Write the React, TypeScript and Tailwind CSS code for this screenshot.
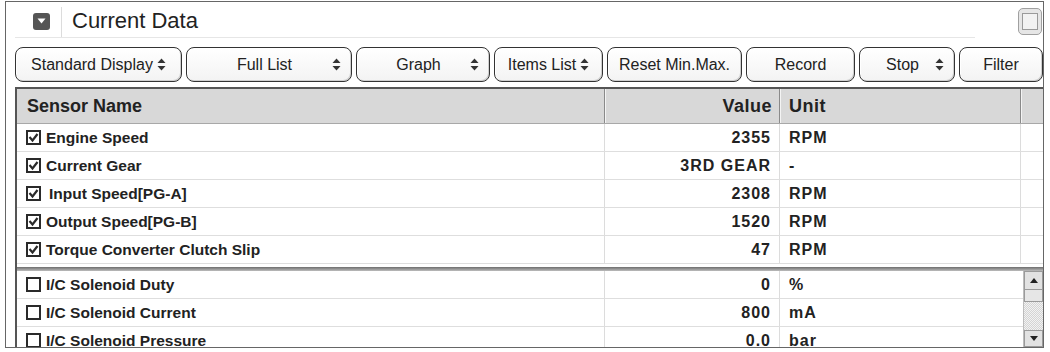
import React from 'react';

interface SensorRow {
  name: string;
  value: string;
  unit: string;
  checked: boolean;
  indent?: boolean;
}

const topRows: SensorRow[] = [
  { name: 'Engine Speed', value: '2355', unit: 'RPM', checked: true },
  { name: 'Current Gear', value: '3RD GEAR', unit: '-', checked: true },
  { name: 'Input Speed[PG-A]', value: '2308', unit: 'RPM', checked: true, indent: true },
  { name: 'Output Speed[PG-B]', value: '1520', unit: 'RPM', checked: true },
  { name: 'Torque Converter Clutch Slip', value: '47', unit: 'RPM', checked: true },
];

const bottomRows: SensorRow[] = [
  { name: 'I/C Solenoid Duty', value: '0', unit: '%', checked: false },
  { name: 'I/C Solenoid Current', value: '800', unit: 'mA', checked: false },
  { name: 'I/C Solenoid Pressure', value: '0.0', unit: 'bar', checked: false },
];

const buttons = [
  { label: 'Standard Display', w: 'w-[167px]', arrow: true, tight: true },
  { label: 'Full List', w: 'w-[166px]', arrow: true },
  { label: 'Graph', w: 'w-[134px]', arrow: true },
  { label: 'Items List', w: 'w-[109px]', arrow: true, tight: true },
  { label: 'Reset Min.Max.', w: 'w-[135px]', arrow: false },
  { label: 'Record', w: 'w-[109px]', arrow: false },
  { label: 'Stop', w: 'w-[96px]', arrow: true },
  { label: 'Filter', w: 'w-[84px]', arrow: false },
];

const UpDown = () => (
  <svg width="9" height="13" viewBox="0 0 9 13" className="shrink-0">
    <path d="M4.5 0.5 L8.5 5 H0.5 Z" fill="#333" />
    <path d="M4.5 12.5 L8.5 8 H0.5 Z" fill="#333" />
  </svg>
);

const CheckBox = ({ checked }: { checked: boolean }) => (
  <span className="w-[15px] h-[15px] border-2 border-[#2a2a2a] bg-white flex items-center justify-center shrink-0">
    {checked && (
      <svg width="11" height="11" viewBox="0 0 11 11">
        <path d="M1.5 5 L4.5 8.5 L9.5 2" fill="none" stroke="#2a2a2a" strokeWidth="2.2" />
      </svg>
    )}
  </span>
);

const DataRow = ({ row }: { row: SensorRow }) => (
  <div className="grid grid-cols-[588px_175px_241px_1fr] h-[28px] border-b border-[#dedede] text-[#222] font-bold">
    <div className="flex items-center pl-[9px] border-r border-[#dcdcdc]">
      <CheckBox checked={row.checked} />
      <span className={`text-[15.5px] ${row.indent ? 'ml-[8px]' : 'ml-[5px]'}`}>{row.name}</span>
    </div>
    <div className="flex items-center justify-end pr-[8px] border-r border-[#dcdcdc] text-[16px] tracking-[1px]">
      {row.value}
    </div>
    <div className="flex items-center pl-[9px] border-r border-[#dcdcdc] text-[16px] tracking-[1px]">
      {row.unit}
    </div>
    <div />
  </div>
);

const BottomRow = ({ row }: { row: SensorRow }) => (
  <div className="grid grid-cols-[588px_175px_241px] h-[28px] border-b border-[#dedede] text-[#222] font-bold">
    <div className="flex items-center pl-[9px] border-r border-[#dcdcdc]">
      <CheckBox checked={row.checked} />
      <span className="ml-[5px] text-[15.5px]">{row.name}</span>
    </div>
    <div className="flex items-center justify-end pr-[8px] border-r border-[#dcdcdc] text-[16px] tracking-[1px]">
      {row.value}
    </div>
    <div className="flex items-center pl-[9px] text-[16px] tracking-[1px]">{row.unit}</div>
  </div>
);

export default function App() {
  return (
    <div className="w-[1050px] h-[352px] bg-white overflow-hidden font-['Liberation_Sans',Arial,sans-serif]">
      <div className="ml-[5px] mt-[1px] w-[1039px] h-[347px] border border-[#666] flex flex-col overflow-hidden">
        {/* Titre */}
        <div className="h-[36px] flex shrink-0">
          <div className="ml-[9px] w-[960px] h-full border-b border-[#e6e6e6] flex items-center">
            <span className="ml-[18px] mt-[3px] w-[17px] h-[17px] rounded-[3px] bg-[#555] flex items-center justify-center">
              <svg width="9" height="6" viewBox="0 0 9 6">
                <path d="M0.5 0.5 H8.5 L4.5 5.5 Z" fill="#fff" />
              </svg>
            </span>
            <span className="ml-[11px] w-px h-[30px] self-end bg-[#dcdcdc]" />
            <span className="ml-[10px] text-[22px] text-[#222] leading-none mt-[2px]">Current Data</span>
          </div>
          <div className="ml-auto mr-px mt-[6px] w-[24px] h-[27px] rounded-[5px] border border-[#a0a0a0] bg-[#e6e6e6] flex items-center justify-center">
            <span className="w-[16px] h-[17px] border border-[#9a9a9a] bg-[#f2f2f2]" />
          </div>
        </div>

        {/* Barre d'outils */}
        <div className="mt-[9px] h-[35px] pl-[9px] flex gap-1 shrink-0">
          {buttons.map((b) => (
            <div
              key={b.label}
              className={`${b.w} h-full rounded-[8px] border border-[#333] bg-gradient-to-b from-white to-[#f3f3f3] shadow-[inset_1px_1px_0_#fff,inset_-1px_-1px_0_#cfcfcf] flex items-center text-[16px] text-[#222] shrink-0 ${b.tight ? 'justify-center gap-[4px] px-[6px]' : 'px-[10px]'}`}
            >
              {b.tight ? (
                <>
                  <span className="whitespace-nowrap">{b.label}</span>
                  {b.arrow && <UpDown />}
                </>
              ) : (
                <>
                  <span className="flex-1 text-center whitespace-nowrap">{b.label}</span>
                  {b.arrow && <UpDown />}
                </>
              )}
            </div>
          ))}
        </div>

        {/* Tableau */}
        <div className="mt-[5px] ml-[9px] flex-1 border-t-2 border-l-2 border-[#555] flex flex-col overflow-hidden">
          <div className="grid grid-cols-[588px_175px_241px_1fr] h-[35px] bg-[#d8d8d8] border-b border-[#a8a8a8] text-[18px] font-bold text-[#222] shrink-0">
            <div className="flex items-center pl-[10px] border-r border-[#8a8a8a] shadow-[1px_0_0_#f4f4f4]">Sensor Name</div>
            <div className="flex items-center justify-end pr-[7px] border-r border-[#8a8a8a] shadow-[1px_0_0_#f4f4f4] tracking-[0.5px]">
              Value
            </div>
            <div className="flex items-center pl-[9px] border-r border-[#8a8a8a] shadow-[1px_0_0_#f4f4f4] tracking-[0.5px]">
              Unit
            </div>
            <div />
          </div>

          {topRows.map((r) => (
            <DataRow key={r.name} row={r} />
          ))}

          {/* Séparateur */}
          <div className="mt-[3px] h-[4px] bg-gradient-to-b from-[#6e6e6e] to-[#bdbdbd] shrink-0" />

          <div className="flex flex-1 overflow-hidden">
            <div className="flex-1">
              {bottomRows.map((r) => (
                <BottomRow key={r.name} row={r} />
              ))}
            </div>
            <div className="w-[20px] border-l border-[#bcbcbc] flex flex-col">
              <div className="h-[19px] bg-[#e2e2e2] border border-[#9a9a9a] flex items-center justify-center">
                <svg width="8" height="5" viewBox="0 0 8 5">
                  <path d="M4 0 L8 5 H0 Z" fill="#222" />
                </svg>
              </div>
              <div className="h-[12px] bg-[#e6e6e6] border border-[#9a9a9a] border-t-0" />
              <div className="flex-1 bg-[repeating-conic-gradient(#d4d4d4_0_25%,#f2f2f2_0_50%)] bg-[length:2px_2px]" />
              <div className="h-[17px] bg-[#e2e2e2] border border-[#9a9a9a] flex items-center justify-center">
                <svg width="8" height="5" viewBox="0 0 8 5">
                  <path d="M0 0 H8 L4 5 Z" fill="#222" />
                </svg>
              </div>
            </div>
          </div>
        </div>
      </div>
    </div>
  );
}
